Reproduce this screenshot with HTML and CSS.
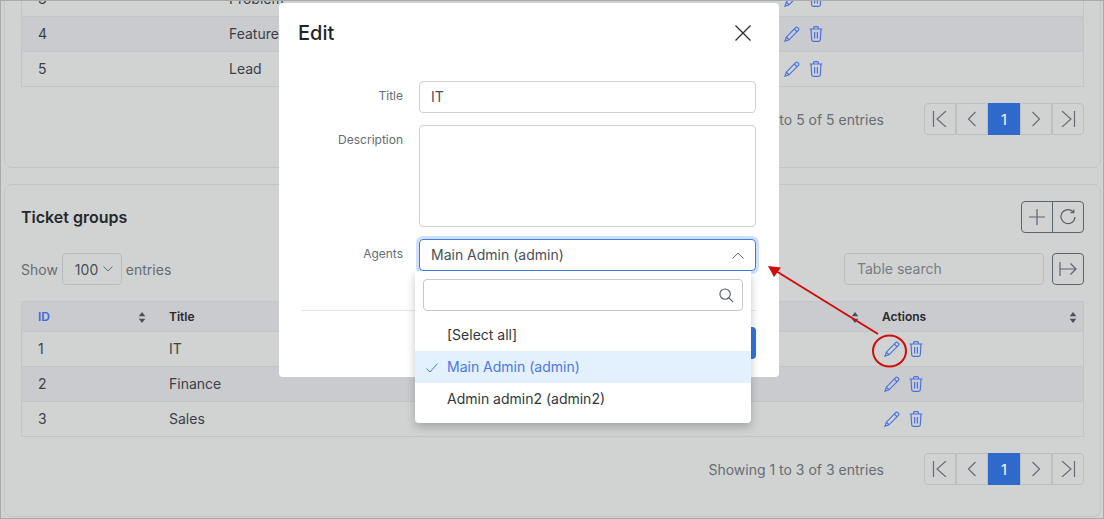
FILE: index.html
```html
<!DOCTYPE html>
<html>
<head>
	<meta charset="utf-8">
	<title>Ticket groups</title>
	<link rel="stylesheet" href="styles.css">
</head>
<body>
	<svg class="defs" width="0" height="0">
		<symbol id="pencil" viewBox="0 0 16 16">
			<path d="M11.6 1.6a1.5 1.5 0 0 1 2.2 0l.6.6a1.5 1.5 0 0 1 0 2.2L5 13.8l-4 1.4 1.3-4z"/>
			<path d="M10.3 3l2.9 2.9M2.3 11.2l2.7 2.6"/>
		</symbol>
		<symbol id="trash" viewBox="0 0 14 16">
			<path d="M.6 3h12.8M4.6 3V1.7q0-1 1-1h2.8q1 0 1 1V3M2 3l.7 10.8q.1 1.5 1.5 1.5h5.6q1.4 0 1.5-1.5L12 3M5.6 6v6.4M8.4 6v6.4"/>
		</symbol>
		<symbol id="first" viewBox="0 0 16 16"><path d="M1.5 0v16M14 0L5 8l9 8"/></symbol>
		<symbol id="prev" viewBox="0 0 16 16"><path d="M11.5 1L4.5 8l7 7"/></symbol>
		<symbol id="next" viewBox="0 0 16 16"><path d="M4.5 1l7 7-7 7"/></symbol>
		<symbol id="last" viewBox="0 0 16 16"><path d="M14.5 0v16M2 0l9 8-9 8"/></symbol>
		<symbol id="sort" viewBox="0 0 8 12"><path class="solid" d="M4 0l3.6 4.6H.4zM4 12L.4 7.4h7.2z"/></symbol>
	</svg>

	<div class="page">
		<section class="card first-card">
			<table class="grid grid-types">
				<tbody>
					<tr><td>3</td><td>Problem</td><td><span class="actions"><svg class="ico"><use href="#pencil"/></svg><svg class="ico bin"><use href="#trash"/></svg></span></td></tr>
					<tr class="odd"><td>4</td><td>Feature</td><td><span class="actions"><svg class="ico"><use href="#pencil"/></svg><svg class="ico bin"><use href="#trash"/></svg></span></td></tr>
					<tr><td>5</td><td>Lead</td><td><span class="actions"><svg class="ico"><use href="#pencil"/></svg><svg class="ico bin"><use href="#trash"/></svg></span></td></tr>
				</tbody>
			</table>
			<div class="tfoot">
				<span class="info">Showing 1 to 5 of 5 entries</span>
				<div class="paging">
					<a><svg><use href="#first"/></svg></a>
					<a><svg><use href="#prev"/></svg></a>
					<a class="current">1</a>
					<a><svg><use href="#next"/></svg></a>
					<a><svg><use href="#last"/></svg></a>
				</div>
			</div>
		</section>

		<section class="card">
			<div class="card-head">
				<h2>Ticket groups</h2>
				<div class="btn-group">
					<button class="tool"><svg viewBox="0 0 16 16"><path d="M8 0v16M0 8h16"/></svg></button>
					<button class="tool"><svg viewBox="0 0 16 16"><path d="M13.6 3.4A7 7 0 1 0 15 8M10.4 3.6h3.4V.4"/></svg></button>
				</div>
			</div>
			<div class="tools-row">
				<div class="show">Show <span class="select">100<svg viewBox="0 0 10 6"><path d="M.5.5L5 5 9.5.5"/></svg></span> entries</div>
				<div class="search">
					<span class="search-box">Table search</span>
					<button class="tool single"><svg viewBox="0 0 18 16"><path d="M1 1v14M1 8h16M11.500 2.500L17 8l-5.500 5.500"/></svg></button>
				</div>
			</div>
			<table class="grid grid-groups">
				<thead>
					<tr>
						<th class="sorted">ID<svg class="sort"><use href="#sort"/></svg></th>
						<th>Title<svg class="sort"><use href="#sort"/></svg></th>
						<th>Actions<svg class="sort"><use href="#sort"/></svg></th>
					</tr>
				</thead>
				<tbody>
					<tr><td>1</td><td>IT</td><td><span class="actions"><svg class="ico"><use href="#pencil"/></svg><svg class="ico bin"><use href="#trash"/></svg></span></td></tr>
					<tr class="odd"><td>2</td><td>Finance</td><td><span class="actions"><svg class="ico"><use href="#pencil"/></svg><svg class="ico bin"><use href="#trash"/></svg></span></td></tr>
					<tr><td>3</td><td>Sales</td><td><span class="actions"><svg class="ico"><use href="#pencil"/></svg><svg class="ico bin"><use href="#trash"/></svg></span></td></tr>
				</tbody>
			</table>
			<div class="tfoot">
				<span class="info">Showing 1 to 3 of 3 entries</span>
				<div class="paging">
					<a><svg><use href="#first"/></svg></a>
					<a><svg><use href="#prev"/></svg></a>
					<a class="current">1</a>
					<a><svg><use href="#next"/></svg></a>
					<a><svg><use href="#last"/></svg></a>
				</div>
			</div>
		</section>
	</div>

	<div class="modal">
		<div class="modal-head">
			<h3>Edit</h3>
			<svg class="close" viewBox="0 0 16 16"><path d="M.5.500l15 15M15.500.500l-15 15"/></svg>
		</div>
		<form class="modal-body">
			<div class="field">
				<label>Title</label>
				<div class="input">IT</div>
			</div>
			<div class="field">
				<label>Description</label>
				<div class="input area"></div>
			</div>
			<div class="field">
				<label>Agents</label>
				<div class="multi">
					<div class="input focused">Main Admin (admin)<svg viewBox="0 0 12 7"><path d="M.5 6.500L6 1l5.500 5.500"/></svg></div>
					<div class="dropdown">
						<div class="drop-search"><svg viewBox="0 0 16 16"><circle cx="6.500" cy="6.500" r="5.500"/><path d="M10.500 10.500L15 15"/></svg></div>
						<ul>
							<li>[Select all]</li>
							<li class="picked"><svg viewBox="0 0 12 10"><path d="M.5 5.500L4 9l7.500-8.500"/></svg>Main Admin (admin)</li>
							<li>Admin admin2 (admin2)</li>
						</ul>
					</div>
				</div>
			</div>
		</form>
		<div class="modal-foot"><button class="save">Save</button></div>
	</div>

	<svg class="callout" width="1104" height="519">
		<ellipse cx="889.500" cy="351" rx="16.500" ry="15.500"/>
		<path d="M878 334L776 271"/>
		<path class="head" d="M768 266l13 1.500-7 9.500z"/>
	</svg>
</body>
</html>
```

FILE: styles.css
```css
*{
	box-sizing: border-box;
}
html,body{
	margin: 0;
	height: 100%;
}
body{
	height: 519px;
	overflow: hidden;
	position: relative;
	border: 1px solid #a9abab;
	background-color: #d1d3d3;
	color: #3b4147;
	font-family: Inter, "Liberation Sans", sans-serif;
	font-size: 14px;
}
.defs{
	position: absolute;
}
symbol path{
	fill: none;
	stroke: currentColor;
	stroke-width: 1.2;
}
symbol path.solid{
	fill: currentColor;
	stroke: none;
}

/* page behind the dialog */
.page{
	display: flex;
	flex-direction: column;
	gap: 16px;
	padding: 0 2px 0 3px;
	margin-top: -31px;
}
.card{
	border: 1px solid #c3c6c8;
	border-radius: 8px;
	padding: 16px 16px 31px;
}
.first-card{
	padding-top: 11px;
	padding-bottom: 32px;
}
.card-head{
	display: flex;
	justify-content: space-between;
	align-items: center;
}
h2{
	margin: 0;
	font-size: 16px;
	font-weight: 600;
	color: #26292c;
}
.btn-group{
	display: flex;
}
.tool{
	width: 32px;
	height: 32px;
	padding: 0;
	display: flex;
	align-items: center;
	justify-content: center;
	background: none;
	border: 1px solid #5c646b;
	border-radius: 0 4px 4px 0;
	margin-left: -1px;
	color: #5c646b;
}
.btn-group .tool:first-child{
	border-radius: 4px 0 0 4px;
	margin-left: 0;
}
.tool.single{
	border-radius: 4px;
	margin-left: 0;
}
.tool svg{
	width: 16px;
	height: 16px;
	fill: none;
	stroke: currentColor;
	stroke-width: 1.2;
}
.tool.single svg{
	width: 18px;
}
.tools-row{
	display: flex;
	justify-content: space-between;
	margin: 20px 0 16px;
}
.show{
	display: flex;
	align-items: center;
	gap: 4px;
	color: #666d73;
}
.select{
	width: 60px;
	height: 32px;
	display: flex;
	align-items: center;
	justify-content: space-between;
	padding: 0 8px 0 12px;
	border: 1px solid #b9bcbf;
	border-radius: 4px;
	color: #4a4f54;
}
.select svg{
	width: 10px;
	height: 6px;
	fill: none;
	stroke: #666d73;
}
.search{
	display: flex;
	gap: 8px;
}
.search-box{
	width: 200px;
	height: 32px;
	line-height: 30px;
	padding-left: 12px;
	border: 1px solid #b9bcbf;
	border-radius: 4px;
	color: #767c82;
}

/* tables */
.grid{
	width: 100%;
	table-layout: fixed;
	border-collapse: separate;
	border-spacing: 0;
	border-left: 1px solid #c3c6c8;
	border-right: 1px solid #c3c6c8;
}
.grid td,.grid th{
	border-bottom: 1px solid #c3c6c8;
	padding: 0 0 0 17px;
	text-align: left;
}
.grid td:first-child,.grid th:first-child{
	padding-left: 16px;
}
.grid td{
	height: 35px;
	padding-bottom: 2px;
}
.grid th{
	height: 31px;
	border-top: 1px solid #c3c6c8;
	font-size: 12px;
	font-weight: 600;
	position: relative;
	background-color: #cacbcf;
	color: #26292c;
}
.grid th.sorted{
	color: #3f68d6;
}
.sort{
	position: absolute;
	right: 6px;
	top: 10px;
	width: 8px;
	height: 11px;
	color: #4b5157;
}
.odd td{
	background-color: #cacbcf;
}
.grid-types td:nth-child(1){
	width: 190px;
}
.grid-types td:nth-child(3){
	width: 318px;
}
.grid-groups th:nth-child(1){
	width: 130px;
}
.grid-groups th:nth-child(3){
	width: 218px;
}
.actions{
	display: flex;
	align-items: center;
	gap: 9px;
	margin: 2px 0 0 2px;
	color: #4a72e0;
}
.ico{
	width: 16px;
	height: 16px;
}
.ico.bin{
	width: 14px;
}
.tfoot{
	display: flex;
	justify-content: flex-end;
	align-items: center;
	gap: 40px;
	margin-top: 16px;
}
.info{
	color: #666d73;
}
.paging{
	display: flex;
}
.paging a{
	width: 32px;
	height: 32px;
	display: flex;
	align-items: center;
	justify-content: center;
	border: 1px solid #bcbfc1;
	color: #666d73;
}
.paging a:first-child{
	border-radius: 4px 0 0 4px;
}
.paging a:last-child{
	border-radius: 0 4px 4px 0;
}
.paging a.current{
	background-color: #2f6acb;
	border-color: #2f6acb;
	color: #e6ecf6;
	font-weight: 500;
}
.paging svg{
	width: 16px;
	height: 16px;
}

/* dialog */
.modal{
	position: absolute;
	left: 278px;
	top: 2px;
	width: 500px;
	height: 374px;
	background-color: #fff;
	border-radius: 4px;
	color: #3b4147;
}
.modal-head{
	display: flex;
	justify-content: space-between;
	align-items: center;
	height: 60px;
	padding: 0 28px 0 19px;
}
h3{
	margin: 0;
	font-size: 20px;
	font-weight: 500;
	color: #212529;
}
.close{
	width: 16px;
	height: 16px;
	fill: none;
	stroke: #2b2f33;
	stroke-width: 1.300;
}
.modal-body{
	display: flex;
	flex-direction: column;
	gap: 12px;
	padding: 18px 23px 0 22px;
}
.field{
	display: grid;
	grid-template-columns: 102px 337px;
	gap: 16px;
}
.field label{
	font-size: 12px;
	line-height: 18px;
	padding-top: 6px;
	text-align: right;
	color: #666d73;
}
.input{
	height: 32px;
	line-height: 30px;
	padding: 0 11px;
	border: 1px solid #ced1d4;
	border-radius: 4px;
	color: #495057;
}
.input.area{
	height: 102px;
}
.multi{
	position: relative;
}
.input.focused{
	display: flex;
	justify-content: space-between;
	align-items: center;
	border-color: #3f7de0;
	box-shadow: 0 0 0 3px #cfdffb;
}
.input.focused svg{
	width: 12px;
	height: 7px;
	fill: none;
	stroke: #666d73;
}
.dropdown{
	position: absolute;
	left: -4px;
	top: 32px;
	width: 336px;
	height: 152px;
	padding: 8px;
	background-color: #fff;
	border-radius: 0 0 4px 4px;
	box-shadow: 0 4px 10px rgba(0,0,0,.22);
	z-index: 2;
}
.drop-search{
	height: 32px;
	display: flex;
	align-items: center;
	justify-content: flex-end;
	padding-right: 8px;
	border: 1px solid #c6c9cc;
	border-radius: 4px;
}
.drop-search svg{
	width: 15px;
	height: 15px;
	fill: none;
	stroke: #555b61;
	stroke-width: 1.200;
}
.dropdown ul{
	list-style: none;
	margin: 8px -8px 0;
	padding: 0;
}
.dropdown li{
	height: 32px;
	line-height: 32px;
	padding-left: 32px;
	position: relative;
	color: #33383d;
}
.dropdown li.picked{
	background-color: #e3f0fd;
	color: #4d78e8;
}
.dropdown li svg{
	position: absolute;
	left: 11px;
	top: 12px;
	width: 12px;
	height: 10px;
	fill: none;
	stroke: #4d78e8;
}
.modal-foot{
	display: flex;
	justify-content: flex-end;
	margin: 39px 23px 0 22px;
	padding-top: 16px;
	border-top: 1px solid #e6e8ea;
}
.save{
	height: 32px;
	width: 70px;
	border: none;
	border-radius: 4px;
	color: #fff;
	background-color: #3474e0;
	font: inherit;
}

/* annotation drawn over the screenshot */
.callout{
	position: absolute;
	left: -1px;
	top: -1px;
	pointer-events: none;
	z-index: 5;
}
.callout ellipse,.callout path{
	fill: none;
	stroke: #d10c0c;
	stroke-width: 2;
}
.callout path.head{
	fill: #d10c0c;
	stroke: none;
}
```
